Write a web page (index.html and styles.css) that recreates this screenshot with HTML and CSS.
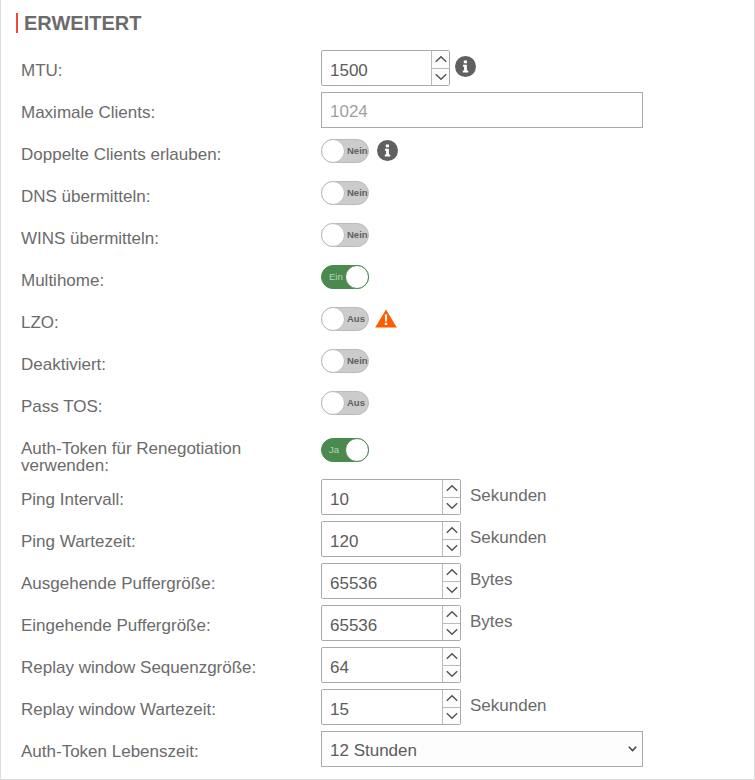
FILE: index.html
```
<!DOCTYPE html>
<html lang="de">
<head>
<meta charset="utf-8">
<title>Erweitert</title>
<link rel="stylesheet" href="styles.css">
</head>
<body>
<svg class="defs" width="0" height="0" aria-hidden="true">
  <defs>
    <symbol id="up" viewBox="0 0 12 8"><path d="M.8 6.800 6 1.800l5.200 5" fill="none" stroke="#555" stroke-width="1.500"/></symbol>
    <symbol id="down" viewBox="0 0 12 8"><path d="M.8 1.200 6 6.200l5.200-5" fill="none" stroke="#555" stroke-width="1.500"/></symbol>
    <symbol id="info" viewBox="0 0 21 21"><circle cx="10.500" cy="10.500" r="10.500" fill="#606060"/><path d="M8.800 4.500h3.200v2.800H8.800zM8 8.700h3.900v5.900h1.300v2H7.800v-2h1.300v-3.900H8z" fill="#fff"/></symbol>
  </defs>
</svg>
<section class="panel">
  <h2 class="title">ERWEITERT</h2>
  <div class="rows">
    <div class="row"><label class="lbl">MTU:</label><div class="ctl">
      <div class="num narrow"><input class="field" value="1500"><div class="spin"><span><svg class="chev"><use href="#up"/></svg></span><span><svg class="chev"><use href="#down"/></svg></span></div></div>
      <svg class="info tight"><use href="#info"/></svg></div></div>
    <div class="row"><label class="lbl">Maximale Clients:</label><div class="ctl"><input class="text" placeholder="1024"></div></div>
    <div class="row"><label class="lbl">Doppelte Clients erlauben:</label><div class="ctl"><div class="tg"><i class="knob"></i><b class="tt">Nein</b></div><svg class="info"><use href="#info"/></svg></div></div>
    <div class="row"><label class="lbl">DNS übermitteln:</label><div class="ctl"><div class="tg"><i class="knob"></i><b class="tt">Nein</b></div></div></div>
    <div class="row"><label class="lbl">WINS übermitteln:</label><div class="ctl"><div class="tg"><i class="knob"></i><b class="tt">Nein</b></div></div></div>
    <div class="row"><label class="lbl">Multihome:</label><div class="ctl"><div class="tg on"><b class="tt">Ein</b><i class="knob"></i></div></div></div>
    <div class="row"><label class="lbl">LZO:</label><div class="ctl"><div class="tg"><i class="knob"></i><b class="tt">Aus</b></div>
      <svg class="warn" viewBox="0 0 22 19"><path d="M11 .5 21.800 18.500H.2z" fill="#ff5c00"/><path d="M9.800 5.500h2.400l-.4 7h-1.600zM9.800 13.700h2.400v2.400H9.800z" fill="#fff"/></svg></div></div>
    <div class="row"><label class="lbl">Deaktiviert:</label><div class="ctl"><div class="tg"><i class="knob"></i><b class="tt">Nein</b></div></div></div>
    <div class="row"><label class="lbl">Pass TOS:</label><div class="ctl"><div class="tg"><i class="knob"></i><b class="tt">Aus</b></div></div></div>
    <div class="row"><label class="lbl">Auth-Token für Renegotiation verwenden:</label><div class="ctl"><div class="tg on"><b class="tt">Ja</b><i class="knob"></i></div></div></div>
    <div class="row"><label class="lbl">Ping Intervall:</label><div class="ctl">
      <div class="num"><input class="field" value="10"><div class="spin"><span><svg class="chev"><use href="#up"/></svg></span><span><svg class="chev"><use href="#down"/></svg></span></div></div><span class="unit">Sekunden</span></div></div>
    <div class="row"><label class="lbl">Ping Wartezeit:</label><div class="ctl">
      <div class="num"><input class="field" value="120"><div class="spin"><span><svg class="chev"><use href="#up"/></svg></span><span><svg class="chev"><use href="#down"/></svg></span></div></div><span class="unit">Sekunden</span></div></div>
    <div class="row"><label class="lbl">Ausgehende Puffergröße:</label><div class="ctl">
      <div class="num"><input class="field" value="65536"><div class="spin"><span><svg class="chev"><use href="#up"/></svg></span><span><svg class="chev"><use href="#down"/></svg></span></div></div><span class="unit">Bytes</span></div></div>
    <div class="row"><label class="lbl">Eingehende Puffergröße:</label><div class="ctl">
      <div class="num"><input class="field" value="65536"><div class="spin"><span><svg class="chev"><use href="#up"/></svg></span><span><svg class="chev"><use href="#down"/></svg></span></div></div><span class="unit">Bytes</span></div></div>
    <div class="row"><label class="lbl">Replay window Sequenzgröße:</label><div class="ctl">
      <div class="num"><input class="field" value="64"><div class="spin"><span><svg class="chev"><use href="#up"/></svg></span><span><svg class="chev"><use href="#down"/></svg></span></div></div></div></div>
    <div class="row"><label class="lbl">Replay window Wartezeit:</label><div class="ctl">
      <div class="num"><input class="field" value="15"><div class="spin"><span><svg class="chev"><use href="#up"/></svg></span><span><svg class="chev"><use href="#down"/></svg></span></div></div><span class="unit">Sekunden</span></div></div>
    <div class="row"><label class="lbl">Auth-Token Lebenszeit:</label><div class="ctl">
      <div class="select"><span class="seltext">12 Stunden</span><svg class="selchev" viewBox="0 0 9 6"><path d="M.8.8 4.500 4.500 8.200.8" fill="none" stroke="#444" stroke-width="1.600"/></svg></div></div></div>
  </div>
</section>
</body>
</html>
```
FILE: styles.css
```
* { box-sizing: border-box; }
html, body { margin: 0; padding: 0; background: #fff; }
body { font-family: "Liberation Sans", Arial, sans-serif; font-size: 17px; color: #6b6b6b; }
.defs { position: absolute; }
.panel { width: 755px; height: 780px; border: 1px solid #ddd; border-top: 0; padding: 13px 0 0 15px; overflow: hidden; }
.title { margin: 0 0 17px; height: 20px; border-left: 2px solid #e74c3c; padding-left: 6px; font-size: 20px; line-height: 20px; font-weight: 700; color: #6b6b6b; }
.rows { display: flex; flex-direction: column; gap: 6px; padding-left: 5px; }
.row { display: flex; align-items: center; min-height: 36px; }
.lbl { align-self: flex-start; width: 300px; margin-bottom: -1px; line-height: 17px; padding-top: 12px; padding-right: 40px; }
.ctl { display: flex; align-items: center; }
.num { display: flex; width: 140px; height: 36px; border: 1px solid #aaa; border-radius: 2px; }
.num.narrow { width: 129px; }
.field { flex: 1; min-width: 0; border: 0; outline: 0; padding: 5px 8px 0; font: 17px "Liberation Sans", Arial, sans-serif; color: #5c5c5c; background: transparent; }
.spin { width: 18px; display: flex; flex-direction: column; border-left: 1px solid #bbb; background: #fcfcfc; }
.spin span { flex: 1; display: flex; align-items: center; justify-content: center; }
.spin span + span { border-top: 1px solid #bbb; }
.chev { width: 12px; height: 8px; }
.text { width: 322px; height: 36px; border: 1px solid #aaa; outline: 0; padding: 4px 8px 0; font: 17px "Liberation Sans", Arial, sans-serif; background: #fff; }
.text::placeholder { color: #a0a0a0; opacity: 1; }
.tg { display: flex; align-items: center; width: 48px; height: 24px; margin-bottom: 2px; border: 1px solid #bbb; border-radius: 12px; background: #ccc; }
.tg .knob { flex: none; width: 24px; height: 24px; margin: -1px 0 -1px -1px; border-radius: 50%; background: #fff; border: 1px solid #bbb; }
.tt { flex: 1; padding-left: 2px; font-size: 9.500px; line-height: 10px; color: #606060; }
.tg.on { background: #4a8a4f; border-color: #4a8a4f; }
.tg.on .knob { margin: -1px -1px -1px 0; border-color: #4a8a4f; }
.tg.on .tt { padding-left: 7px; font-weight: 400; color: #b9d3ba; }
.info { width: 21px; height: 21px; margin: 0 0 4px 8px; }
.info.tight { margin-left: 5px; }
.warn { width: 22px; height: 19px; margin: 0 0 4px 6px; }
.unit { margin: 0 0 2px 9px; }
.select { display: flex; align-items: center; justify-content: space-between; width: 322px; height: 36px; border: 1px solid #aaa; padding: 0 5px 0 8px; background: #fdfdfd; color: #5c5c5c; }
.seltext { padding-top: 4px; }
.selchev { width: 9px; height: 6px; }
```
